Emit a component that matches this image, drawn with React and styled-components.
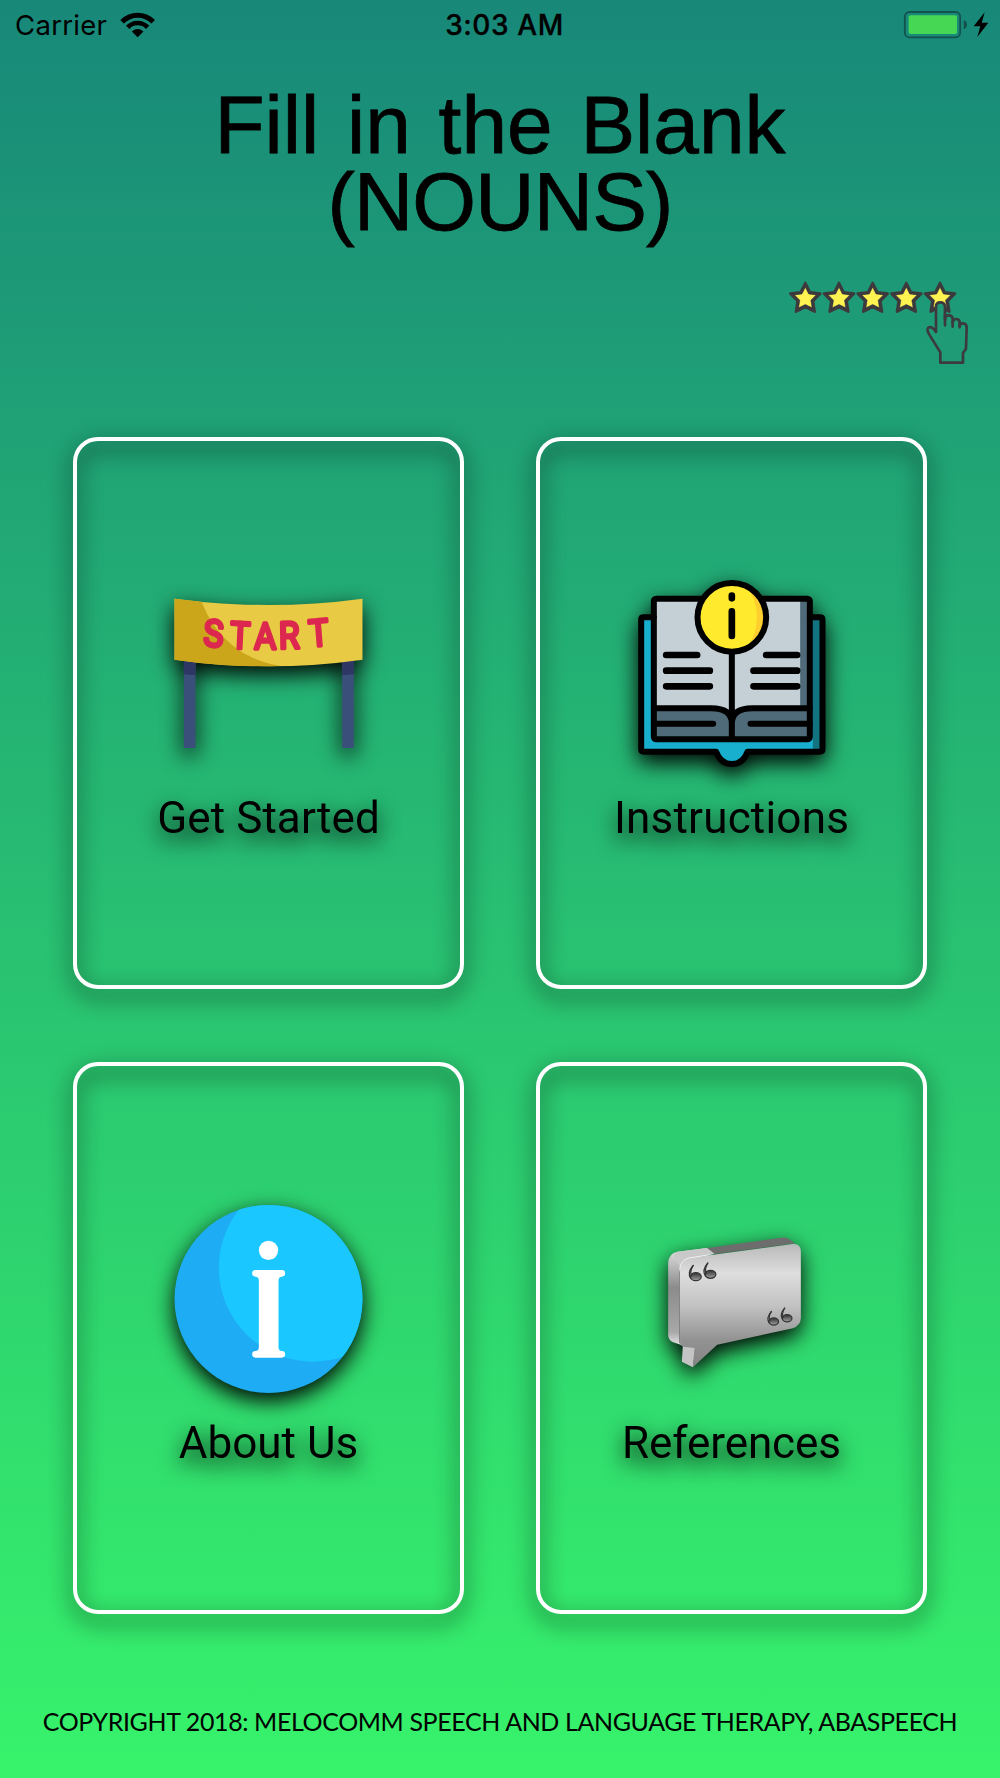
import React from "react";
import styled, { createGlobalStyle } from "styled-components";

const GlobalStyle = createGlobalStyle`
  *, *::before, *::after { box-sizing: border-box; }
  html, body { margin: 0; padding: 0; }
`;

const Screen = styled.div`
  width: 1000px;
  height: 1778px;
  display: flex;
  flex-direction: column;
  overflow: hidden;
  color: #000;
  background: linear-gradient(180deg, #188879 0%, #37f36b 100%);
  font-family: Roboto, "Liberation Sans", sans-serif;
`;

const StatusBar = styled.header`
  height: 50px;
  flex: none;
  display: grid;
  grid-template-columns: 1fr auto 1fr;
  align-items: center;
  padding: 0 11px 0 15px;
  font-family: Inter, sans-serif;
  font-size: 27.5px;
  line-height: 50px;
`;

const StatusSide = styled.div`
  display: flex;
  align-items: center;
  justify-content: ${(p) => p.$justify};
  gap: 13px;
`;

const Carrier = styled.span`
  letter-spacing: 0.3px;
`;

const Clock = styled.time`
  font-weight: 500;
  font-size: 28px;
  letter-spacing: 0.6px;
  padding-left: 5px;
  -webkit-text-stroke: 0.3px #000;
`;

const Title = styled.h1`
  flex: none;
  margin: 36px 0 0;
  height: 156px;
  font-family: "Liberation Sans", Arial, sans-serif;
  font-size: 82px;
  font-weight: 400;
  line-height: 77px;
  text-align: center;
  -webkit-text-stroke: 0.8px #000;
`;

const TitleLine = styled.span`
  display: block;
  letter-spacing: ${(p) => p.$spacing};
  word-spacing: 5px;
`;

const RatingRow = styled.div`
  flex: none;
  display: flex;
  justify-content: flex-end;
  margin-top: 37px;
  padding-right: 27px;
`;

const Grid = styled.main`
  flex: none;
  display: grid;
  grid-template-columns: 391px 391px;
  grid-auto-rows: 552px;
  gap: 73px 72px;
  margin-top: 70px;
  padding-left: 73px;
`;

const Card = styled.button`
  display: flex;
  flex-direction: column;
  align-items: center;
  justify-content: center;
  margin: 0;
  padding: 0;
  border: 4px solid #fff;
  border-radius: 25px;
  background: transparent;
  color: #000;
  font: inherit;
  filter: drop-shadow(0 8px 11px #000);
`;

const CardIcon = styled.svg`
  display: block;
  width: 189px;
  height: 188px;
`;

const Label = styled.span`
  margin-top: 26px;
  height: 52px;
  font-size: 44px;
  line-height: 48px;
  letter-spacing: ${(p) => p.$spacing};
`;

const Footer = styled.footer`
  flex: none;
  margin-top: 89px;
  font-family: Lato, sans-serif;
  font-size: 25px;
  line-height: 36px;
  letter-spacing: -0.39px;
  text-align: center;
  white-space: nowrap;
`;

function WifiIcon() {
  return (
    <svg width="36" height="26" viewBox="360 34 108 78" aria-hidden="true">
      <defs>
        <clipPath id="wedge">
          <path d="M413 110L341 38V20H485V38Z" />
        </clipPath>
      </defs>
      <g clipPath="url(#wedge)">
        <circle cx="413" cy="108" r="64.5" fill="none" stroke="#000" strokeWidth="15" />
        <circle cx="413" cy="108" r="41" fill="none" stroke="#000" strokeWidth="14" />
        <circle cx="413" cy="108" r="23" />
      </g>
    </svg>
  );
}

function BatteryIcon() {
  return (
    <svg width="86" height="28" viewBox="67 32 258 84" aria-hidden="true">
      <rect x="72.5" y="35" width="166" height="76" rx="14" fill="none" stroke="#12544d" strokeWidth="5.5" />
      <rect x="84" y="45" width="145" height="56" rx="6" fill="#46d755" />
      <path d="M249 59Q259 63 259 73T249 87Z" fill="#12544d" />
      <path d="M312 36L279 78H299L290 110L323 67H303Z" />
    </svg>
  );
}

const STAR = "M0-45L14-17L45-13L23 9L28 41L0 27L-28 41L-23 9L-45-13L-14-17Z";

function RatingArt() {
  return (
    <svg width="187" height="88" viewBox="50 55 561 264" aria-label="Five stars">
      {[108, 209, 310, 411, 512].map((x) => (
        <g key={x} transform={`translate(${x} 112)`}>
          <path d={STAR} fill="#3c3a3d" stroke="#3c3a3d" strokeWidth="8" strokeLinejoin="round" />
          <path d={STAR} fill="#fff352" stroke="#24213f" strokeWidth="2" transform="scale(.72)" />
        </g>
      ))}
      <path
        d="M500 214V138Q500 125 513 125T527 138V178Q527 164 538 164T550 174V187Q550 175 560 175T571 184V196Q572 187 582 188Q592 189 592 201L590 264L581 277V306H513V275L480 222Q471 206 477 201Q487 194 500 214Z"
        fill="#1f9b76"
        stroke="#3c3a3d"
        strokeWidth="8"
        strokeLinejoin="round"
      />
      <path d="M527 160V194M550 184V198M571 190V200" stroke="#3c3a3d" strokeWidth="8" strokeLinecap="round" />
    </svg>
  );
}

function StartIcon() {
  return (
    <CardIcon viewBox="102 33 564 564" aria-hidden="true">
      <rect x="130" y="270" width="35" height="267" fill="#3b4f7b" />
      <rect x="605" y="270" width="35" height="267" fill="#3b4f7b" />
      <path d="M130 270H165V319L130 316Z" fill="#2e3763" />
      <path d="M605 270H640V316L605 319Z" fill="#2e3763" />
      <path d="M102 89Q384 127 666 89V272Q384 312 102 272Z" fill="#e8ca44" />
      <path d="M102 89L183 98Q248 262 420 291Q260 296 102 272Z" fill="#cba61a" />
      <text
        transform="scale(.9 1)"
        x="208 297 379 462 564"
        y="231 237 241 239 234"
        rotate="3 3 0 -1 -5"
        fontFamily="Roboto, sans-serif"
        fontSize="112"
        fill="#dc274f"
        stroke="#dc274f"
        strokeWidth="10"
        strokeLinejoin="round"
      >
        START
      </text>
    </CardIcon>
  );
}

function BookIcon() {
  return (
    <CardIcon viewBox="83 62 564 564" aria-hidden="true">
      <path
        d="M94 181Q94 174 101 174H630Q638 174 638 181V570Q638 577 630 577H413Q400 614 366 614T319 577H101Q94 577 94 570Z"
        fill="#18afce"
      />
      <path d="M609 174H638V577H609Z" fill="#117480" />
      <rect x="132" y="118" width="468" height="422" fill="#c5d0d6" />
      <path d="M571 118H600V445H571Z" fill="#4f6a79" />
      <path d="M132 447H312Q352 449 366 485Q382 447 420 447H600V540H132Z" fill="#4f6a79" />
      <g fill="none" stroke="#000" strokeWidth="18" strokeLinecap="round" strokeLinejoin="round">
        <path d="M132 174H101Q94 174 94 181V570Q94 577 101 577H319Q332 614 366 614T413 577H630Q638 577 638 570V181Q638 174 630 174H600" />
        <rect x="132" y="118" width="468" height="422" rx="7" />
        <path d="M366 280V538M132 447H304Q366 447 366 493Q366 447 428 447H600M132 493H310M600 493H422" />
        <path d="M169 287H262M169 334H300M169 381H300M469 287H562M431 334H562M431 381H562" strokeWidth="20" />
      </g>
      <circle cx="366" cy="174" r="103" fill="#ffea2e" />
      <path d="M405 78A103 103 0 0 1 405 270Q441 233 441 174T405 78Z" fill="#fecf2e" />
      <circle cx="366" cy="174" r="103" fill="none" stroke="#000" strokeWidth="18" />
      <path d="M366 109V117M366 156V230" stroke="#000" strokeWidth="20" strokeLinecap="round" />
    </CardIcon>
  );
}

function InfoIcon() {
  return (
    <CardIcon viewBox="72 75 564 564" aria-hidden="true">
      <defs>
        <clipPath id="disc">
          <circle cx="354" cy="357" r="282" />
        </clipPath>
      </defs>
      <circle cx="354" cy="357" r="282" fill="#1eadf5" />
      <circle cx="487" cy="263" r="282" fill="#1ac8ff" clipPath="url(#disc)" />
      <circle cx="354" cy="211" r="29" fill="#fff" />
      <path
        d="M315 270H394Q404 270 404 280T394 290Q384 290 384 302V500Q384 513 394 513Q404 513 404 523T394 533H315Q305 533 305 523T315 513Q325 513 325 500V302Q325 290 315 290Q305 290 305 280T315 270Z"
        fill="#fff"
      />
    </CardIcon>
  );
}

const QUOTE_MARKS = [
  { x: 287, y: 197, s: 1 },
  { x: 331, y: 190, s: 1 },
  { x: 521, y: 332, s: 0.9 },
  { x: 561, y: 322, s: 0.9 },
];

function QuoteIcon() {
  return (
    <CardIcon viewBox="113 -14 564 564" aria-hidden="true">
      <defs>
        <linearGradient id="face" x1="0" y1="0" x2="0" y2="1">
          <stop offset="0" stopColor="#b9b9b9" />
          <stop offset=".24" stopColor="#dedede" />
          <stop offset=".5" stopColor="#c2c2c2" />
          <stop offset=".78" stopColor="#929292" />
          <stop offset="1" stopColor="#858585" />
        </linearGradient>
        <linearGradient id="side" x1="0" y1="0" x2="0" y2="1">
          <stop offset="0" stopColor="#e2e2e2" />
          <stop offset=".4" stopColor="#8b8b8b" />
          <stop offset=".85" stopColor="#a8a8a8" />
          <stop offset="1" stopColor="#ededed" />
        </linearGradient>
        <linearGradient id="mark" x1="0" y1="0" x2="0" y2="1">
          <stop offset="0" stopColor="#303030" />
          <stop offset="1" stopColor="#a2a2a2" />
        </linearGradient>
      </defs>
      <path d="M205 160Q206 131 233 126L322 115L345 132L262 150V412L218 397Q205 390 205 376Z" fill="url(#side)" />
      <path d="M233 126L322 115L345 132L267 146Q246 149 239 169L222 136Z" fill="#c9c9c9" />
      <path d="M322 115L545 84Q560 82 570 90L586 101L345 133Z" fill="#6d6d6d" />
      <path d="M249 408L287 412L279 473L246 456Z" fill="#c4c4c4" />
      <path
        d="M239 182Q239 151 268 145L579 103Q602 101 603 124V326Q602 348 579 356L352 405L279 473L284 415L250 411Q239 406 239 390Z"
        fill="url(#face)"
      />
      <path d="M240 178Q241 151 268 145L330 135" fill="none" stroke="#efefef" strokeWidth="3" />
      <path d="M239 185V401" stroke="#6f6f6f" strokeWidth="2" />
      {QUOTE_MARKS.map((m) => (
        <g key={m.x} transform={`translate(${m.x} ${m.y}) scale(${m.s})`}>
          <path d="M-7-30Q-26-8-14 9" fill="none" stroke="#353535" strokeWidth="4" strokeLinecap="round" />
          <ellipse cx="1" cy="4" rx="16" ry="12" fill="url(#mark)" stroke="#353535" strokeWidth="4" />
          <path d="M-7-30Q-20-8-10 2" fill="none" stroke="#353535" strokeWidth="4" />
        </g>
      ))}
    </CardIcon>
  );
}

const ITEMS = [
  { label: "Get Started", Icon: StartIcon, spacing: "0.1px" },
  { label: "Instructions", Icon: BookIcon, spacing: "0.2px" },
  { label: "About Us", Icon: InfoIcon, spacing: "0" },
  { label: "References", Icon: QuoteIcon, spacing: "-0.1px" },
];

export default function App() {
  return (
    <Screen>
      <GlobalStyle />
      <StatusBar>
        <StatusSide $justify="flex-start">
          <Carrier>Carrier</Carrier>
          <WifiIcon />
        </StatusSide>
        <Clock>3:03 AM</Clock>
        <StatusSide $justify="flex-end">
          <BatteryIcon />
        </StatusSide>
      </StatusBar>
      <Title>
        <TitleLine $spacing="0">Fill in the Blank</TitleLine>
        <TitleLine $spacing="-0.8px">(NOUNS)</TitleLine>
      </Title>
      <RatingRow>
        <RatingArt />
      </RatingRow>
      <Grid>
        {ITEMS.map(({ label, Icon, spacing }) => (
          <Card key={label} type="button">
            <Icon />
            <Label $spacing={spacing}>{label}</Label>
          </Card>
        ))}
      </Grid>
      <Footer>COPYRIGHT 2018: MELOCOMM SPEECH AND LANGUAGE THERAPY, ABASPEECH</Footer>
    </Screen>
  );
}
